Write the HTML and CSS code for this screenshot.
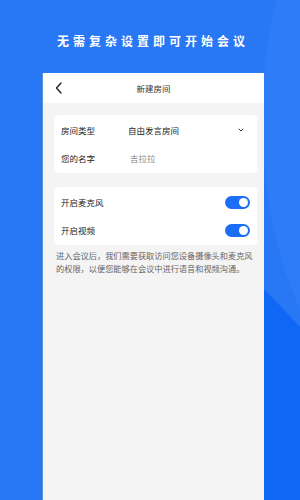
FILE: index.html
```html
<!DOCTYPE html>
<html lang="zh-CN">
<head>
<meta charset="UTF-8" />
<meta name="viewport" content="width=device-width, initial-scale=1" />
<title>新建房间</title>
<link rel="stylesheet" href="styles.css">
</head>
<body>
  <div class="page">
    <h1 class="slogan">无需复杂设置即可开始会议</h1>

    <div class="phone">
      <div class="topbar">
        <svg class="back" width="10" height="12" viewBox="0 0 10 12" aria-hidden="true">
          <path d="M7 1 L2.5 6 L7 11" fill="none" stroke="#222" stroke-width="1.4" stroke-linecap="round" stroke-linejoin="round"/>
        </svg>
        <span class="topbar-title">新建房间</span>
      </div>

      <div class="content">
        <div class="card">
          <div class="row">
            <span class="label">房间类型</span>
            <span class="value">自由发言房间</span>
            <svg class="chevron" width="6" height="4" viewBox="0 0 6 4" aria-hidden="true">
              <path d="M0.8 0.8 L3 3 L5.2 0.8" fill="none" stroke="#333" stroke-width="1"/>
            </svg>
          </div>
          <div class="row">
            <span class="label">您的名字</span>
            <span class="value placeholder">吉拉拉</span>
          </div>
        </div>

        <div class="card">
          <div class="row">
            <span class="label">开启麦克风</span>
            <span class="switch on"></span>
          </div>
          <div class="row">
            <span class="label">开启视频</span>
            <span class="switch on"></span>
          </div>
        </div>

        <p class="note">进入会议后，我们需要获取访问您设备摄像头和麦克风的权限，以便您能够在会议中进行语音和视频沟通。</p>
      </div>
    </div>
  </div>
</body>
</html>
```

FILE: styles.css
```css
:root {
  --bg-blue: #2877f4;
  --bg-blue-light: #2e7cf7;
  --bg-blue-deep: #0e67f5;
  --accent: #1b6ef5;
  --page-bg: #f4f4f5;
  --text: #222;
  --muted: #666;
  --font: "Noto Sans CJK SC", "Noto Sans", sans-serif;
}

* {
  box-sizing: border-box;
}

html, body {
  margin: 0;
  height: 100%;
}

body {
  background-color: var(--bg-blue);
  font-family: var(--font);
  color: var(--text);
  overflow: hidden;
  position: relative;
}

/* decorative shapes on the right side */
body::before,
body::after {
  content: "";
  position: absolute;
  inset: 0;
}

body::before {
  background: var(--bg-blue-light);
  clip-path: ellipse(210px 330px at 472px 120px);
}

body::after {
  background: var(--bg-blue-deep);
  clip-path: polygon(264px 289px, 300px 327px, 300px 500px, 264px 500px);
}

.page {
  position: relative;
  z-index: 1;
  height: 100%;
  display: flex;
  flex-direction: column;
  align-items: center;
}

.slogan {
  margin: 32px 0 0 6px;
  font-size: 12px;
  line-height: 17px;
  font-weight: bold;
  letter-spacing: 4px;
  color: #fff;
}

.phone {
  margin: 24px 0 0 6px;
  width: 222px;
  flex: 1;
  background: var(--page-bg);
  border-left: 1px solid #5d8fd6;
}

.topbar {
  height: 30px;
  background: #fff;
  display: flex;
  align-items: center;
  justify-content: center;
  position: relative;
}

.back {
  position: absolute;
  left: 11px;
  top: 9px;
}

.topbar-title {
  font-size: 8.5px;
  color: #333;
}

.content {
  padding: 12px 7px 0 11px;
  display: flex;
  flex-direction: column;
  gap: 14px;
}

.card {
  background: #fff;
  border-radius: 4px;
  padding: 1px 7px;
}

.row {
  height: 28px;
  display: flex;
  align-items: center;
  font-size: 8.5px;
}

.label {
  width: 67px;
  color: var(--text);
}

.value {
  flex: 1;
  color: var(--text);
}

.value.placeholder {
  color: #888;
  padding-left: 2px;
}

.chevron {
  margin-right: 6px;
}

.switch {
  margin-left: auto;
  width: 25px;
  height: 13px;
  border-radius: 7px;
  background: #ccc;
  position: relative;
}

.switch::after {
  content: "";
  position: absolute;
  top: 2px;
  left: 2px;
  width: 9px;
  height: 9px;
  border-radius: 50%;
  background: #fff;
}

.switch.on {
  background: var(--accent);
}

.switch.on::after {
  left: 14px;
}

.note {
  margin: -10px 2px 0 2px;
  font-size: 8.2px;
  line-height: 13px;
  color: var(--muted);
}
```
